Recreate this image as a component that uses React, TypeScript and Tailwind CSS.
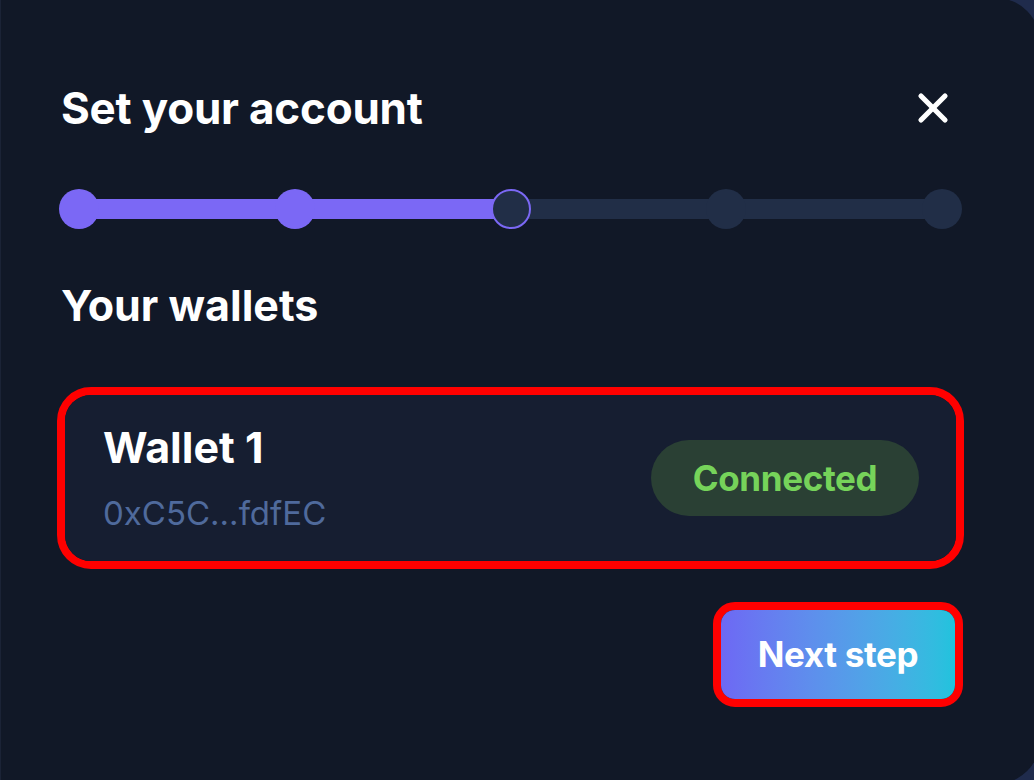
import { X } from "lucide-react";

const steps = [0, 1, 2, 3, 4];
const current = 2;

function Stepper() {
  return (
    <div className="relative -ml-[2px] mt-[57px] h-10 w-[903px]">
      <div className="absolute left-[20px] right-[20px] top-[10px] h-5 bg-[#212e47]" />
      <div className="absolute left-[20px] top-[10px] h-5 w-[432px] bg-[#7b68f5]" />
      <div className="relative flex justify-between">
        {steps.map((s) => (
          <div
            key={s}
            className={
              s < current
                ? "h-10 w-10 rounded-full bg-[#7b68f5]"
                : s === current
                ? "h-10 w-10 rounded-full border-2 border-[#7b68f5] bg-[#212e47]"
                : "h-10 w-10 rounded-full bg-[#212e47]"
            }
          />
        ))}
      </div>
    </div>
  );
}

export default function App() {
  return (
    <div className="h-[780px] w-[1034px] overflow-hidden bg-[#1f2b4c]" style={{ fontFamily: "Inter, 'Noto Sans', sans-serif" }}>
      <div className="-mt-[2px] h-[786px] w-[1040px] rounded-r-[44px] border-l border-[#1b2336] bg-[#111827] pl-[60px] pt-[86px]">
        <div className="flex w-[900px] items-center justify-between">
          <h2 className="text-[44px] font-bold leading-none tracking-[-0.005em] text-white">Set your account</h2>
          <X className="mr-[4px] h-12 w-12 text-white" strokeWidth={2.6} />
        </div>

        <Stepper />

        <h3 className="mt-[55px] text-[43px] font-bold leading-none text-white">Your wallets</h3>

        <div className="-ml-[4px] mt-[60px] w-[907px] rounded-[34px] border-[8px] border-[#ff0000]">
          <div className="flex items-center justify-between rounded-[26px] bg-[#161e31] pb-[31px] pl-[38px] pr-[37px] pt-[31px]">
            <div className="flex flex-col">
              <span className="text-[43px] font-bold leading-none text-white">Wallet 1</span>
              <span className="mt-[28px] text-[33px] leading-none text-[#4f6a9c]">0xC5C...fdfEC</span>
            </div>
            <div className="flex h-[76px] w-[268px] items-center justify-center rounded-full bg-[#2a4034] text-[35px] font-bold tracking-[-0.01em] text-[#76d35a]">
              Connected
            </div>
          </div>
        </div>

        <div className="-ml-[4px] mt-[33px] flex w-[906px] justify-end">
          <div className="rounded-[22px] border-[8px] border-[#ff0000]">
            <button className="flex h-[89px] w-[234px] items-center justify-center rounded-[14px] bg-gradient-to-r from-[#6d68f4] to-[#20c3dd] text-[35px] font-bold tracking-[-0.01em] text-white">
              Next step
            </button>
          </div>
        </div>
      </div>
    </div>
  );
}
